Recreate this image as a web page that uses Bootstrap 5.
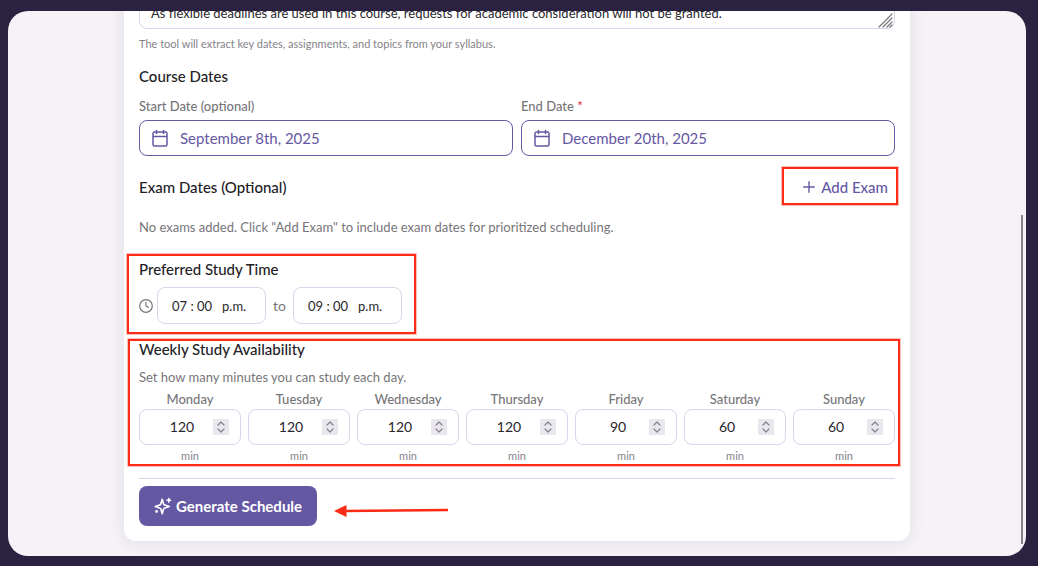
<!DOCTYPE html>
<html lang="en">
<head>
<meta charset="utf-8">
<meta name="viewport" content="width=device-width, initial-scale=1">
<title>Study Schedule Generator</title>
<link href="https://cdn.jsdelivr.net/npm/bootstrap@5.3.0/dist/css/bootstrap.min.css" rel="stylesheet">
<style>
  :root { --violet: #6558a3; --line: #d9d5ea; --mark: #fb2b17; }
  body { background: #2b2241; font-family: Lato, sans-serif; font-size: 13px; line-height: 20px; color: #777579; padding: 11px 12px 10px 8px; }
  .app-frame { height: calc(100vh - 21px); min-height: 480px; background: #f5f3f7; border-radius: 20px; padding: 0 16px 15px; }
  .planner { max-width: 786px; border: 0; border-radius: 12px; padding: 0 15px 15px; box-shadow: 0 2px 16px rgba(50, 40, 80, .1); color: inherit; }
  .scroll-thumb { width: 2px; top: 204px; bottom: 12px; right: 3px; background: #858389; }
  h2 { font-size: 15px; line-height: 24px; font-weight: 500; color: #232126; margin: 0; }
  .field-label { font-weight: 500; line-height: 20px; }
  .hint { font-size: 11px; line-height: 18px; color: #858389; }
  .form-control { font-size: 13px; line-height: 20px; color: #29272c; border-color: var(--line); border-radius: 8px; }
  .syllabus { height: 56px; min-height: 0; padding: 29px 11px 4px; resize: none; overflow: hidden; }
  .syllabus-hint { margin-top: 6px; }
  .grip { right: 1px; bottom: 1px; }
  .head-dates { margin: 11px 0 8px; }
  .date-grid { gap: 8px; }
  .date-box { height: 36px; margin-top: 4px; padding: 0 12px; gap: 11px; border: 1px solid var(--violet); border-radius: 8px; color: var(--violet); }
  .plain-input { min-width: 0; border: 0; outline: 0; padding: 0; background: transparent; color: inherit; }
  .date-box .plain-input { font-size: 15px; }
  .exam-head { margin-top: 13px; }
  .exam-note { margin: 12px 0 20px; }
  .add-exam { font-size: 15px; font-weight: 500; color: var(--violet); padding: 0 7px; height: 36px; gap: 6px; border: 0; }
  .time-row { margin-top: 6px; }
  .clock { margin-right: 4px; }
  .to-word { width: 27px; text-align: center; font-size: 14px; }
  .time-input { width: 109px; height: 37px; padding: 0 14px; white-space: pre; }
  .week-block { margin-top: 13px; }
  .week-note { margin: 6px 0 2px; }
  .day-grid { display: grid; grid-template-columns: repeat(7, minmax(0, 1fr)); gap: 7px; }
  .minutes-box { height: 36px; padding: 0 11px; border: 1px solid var(--line); border-radius: 8px; color: #29272c; }
  .minutes-box .plain-input { font-size: 14px; text-align: center; appearance: textfield; -moz-appearance: textfield; }
  .minutes-box .plain-input::-webkit-inner-spin-button { appearance: none; -webkit-appearance: none; margin: 0; }
  .minutes-unit { margin-top: 2px; }
  .spinner-keys { width: 16px; height: 16px; background: #e9e6ee; }
  .action-row { margin-top: 13px; border-top: 1px solid var(--line); padding-top: 7px; gap: 17px; }
  .generate { height: 40px; padding: 0 15px; gap: 4px; border: 0; border-radius: 8px; background: var(--violet); color: #fff; font-size: 15px; font-weight: 700; }
  .generate:hover { background: #574a95; color: #fff; }
  .arrow { margin-top: 10px; }
  .callout { position: absolute; border: 2px solid var(--mark); box-shadow: 0 0 0 1px rgba(251, 43, 23, .3); pointer-events: none; }
  .callout-exam { inset: -2px -3px 0 -2px; }
  .callout-time { inset: -3px -14px -10px -12px; }
  .callout-week { inset: 2px -5px -1px -11px; }
  .st { fill: none; stroke: currentColor; stroke-linecap: round; stroke-linejoin: round; }
</style>
</head>
<body>
<div class="app-frame position-relative overflow-hidden d-flex flex-column justify-content-end">
  <form class="planner card w-100 mx-auto">
    <div class="position-relative">
      <textarea class="form-control syllabus d-block" id="syllabus" rows="1" aria-label="Syllabus">As flexible deadlines are used in this course, requests for academic consideration will not be granted.</textarea>
      <svg class="grip position-absolute" width="16" height="15" viewBox="0 0 16 15" aria-hidden="true"><path class="st" style="color:#77757b" stroke-width="1.2" d="M1 14 14 1M5 14 14 5M9 14l5-5M12 14l2-2"/></svg>
    </div>
    <label class="hint syllabus-hint d-block" for="syllabus">The tool will extract key dates, assignments, and topics from your syllabus.</label>

    <h2 class="head-dates">Course Dates</h2>
    <div class="date-grid d-flex">
      <div class="w-50">
        <label class="field-label d-block" for="start">Start Date (optional)</label>
        <div class="date-box d-flex align-items-center">
          <svg width="17" height="19" viewBox="0 0 17 19" aria-hidden="true"><path class="st" stroke-width="1.5" d="M2.500 3h11A1.500 1.500 0 0 1 15 4.500v11a1.500 1.500 0 0 1-1.500 1.500h-11A1.500 1.500 0 0 1 1 15.500v-11A1.500 1.500 0 0 1 2.500 3ZM1 7.500h14M4.500 1.500v3M11.500 1.500v3"/></svg>
          <input class="plain-input flex-grow-1" id="start" type="text" value="September 8th, 2025">
        </div>
      </div>
      <div class="w-50">
        <label class="field-label d-block" for="end">End Date <span class="text-danger">*</span></label>
        <div class="date-box d-flex align-items-center">
          <svg width="17" height="19" viewBox="0 0 17 19" aria-hidden="true"><path class="st" stroke-width="1.5" d="M2.500 3h11A1.500 1.500 0 0 1 15 4.500v11a1.500 1.500 0 0 1-1.500 1.500h-11A1.500 1.500 0 0 1 1 15.500v-11A1.500 1.500 0 0 1 2.500 3ZM1 7.500h14M4.500 1.500v3M11.500 1.500v3"/></svg>
          <input class="plain-input flex-grow-1" id="end" type="text" value="December 20th, 2025">
        </div>
      </div>
    </div>

    <div class="exam-head d-flex justify-content-between align-items-center">
      <h2>Exam Dates (Optional)</h2>
      <div class="position-relative ps-2">
        <button type="button" class="btn add-exam d-flex align-items-center ms-1">
          <svg width="12" height="12" viewBox="0 0 12 12" aria-hidden="true"><path class="st" stroke-width="1.4" d="M6 .7v10.600M.7 6h10.600"/></svg>
          Add Exam
        </button>
        <span class="callout callout-exam"></span>
      </div>
    </div>
    <p class="exam-note">No exams added. Click "Add Exam" to include exam dates for prioritized scheduling.</p>

    <section class="position-relative align-self-start">
      <h2>Preferred Study Time</h2>
      <div class="time-row d-flex align-items-center">
        <svg class="clock" width="14" height="14" viewBox="0 0 14 14" aria-hidden="true"><circle class="st" cx="7" cy="7" r="6.300" stroke-width="1.200"/><path class="st" stroke-width="1.200" d="M7 3.300V7l2.400 1.300"/></svg>
        <input class="form-control time-input" type="text" aria-label="From" value="07 : 00   p.m.">
        <span class="to-word">to</span>
        <input class="form-control time-input" type="text" aria-label="To" value="09 : 00   p.m.">
      </div>
      <span class="callout callout-time"></span>
    </section>

    <section class="week-block position-relative">
      <h2>Weekly Study Availability</h2>
      <p class="week-note">Set how many minutes you can study each day.</p>
      <div class="day-grid text-center" id="days"></div>
      <span class="callout callout-week"></span>
    </section>

    <div class="action-row d-flex align-items-center">
      <button type="submit" class="btn generate d-flex align-items-center">
        <svg width="18" height="18" viewBox="0 0 18 18" aria-hidden="true"><path class="st" stroke-width="1.600" d="M8.200 2.200 9.500 6.800c.2.700.6 1.100 1.300 1.300L15.200 9.500l-4.400 1.400c-.7.200-1.100.6-1.300 1.300L8.200 16.800 6.900 12.200c-.2-.7-.6-1.100-1.300-1.300L1.200 9.500l4.400-1.400c.7-.2 1.100-.6 1.300-1.300ZM14.800 1.500v3.600M13 3.300h3.600"/><circle cx="2.600" cy="14.500" r="1.400" fill="currentColor"/></svg>
        Generate Schedule
      </button>
      <svg class="arrow" width="114" height="14" viewBox="0 0 114 14" aria-hidden="true"><path d="M11 7 114 6" stroke="#fb2b17" stroke-width="2.500"/><path d="M0 7 12.500 1v12Z" fill="#fb2b17"/></svg>
    </div>
  </form>
  <div class="scroll-thumb position-absolute"></div>
</div>
<script>
  const days = [["Monday",120],["Tuesday",120],["Wednesday",120],["Thursday",120],["Friday",90],["Saturday",60],["Sunday",60]];
  document.getElementById("days").innerHTML = days.map(([day, minutes]) => `
    <div>
      <label class="field-label d-block" for="${day}">${day}</label>
      <div class="minutes-box d-flex align-items-center">
        <input class="plain-input flex-grow-1" id="${day}" type="number" value="${minutes}">
        <svg class="spinner-keys flex-shrink-0" viewBox="0 0 16 16" aria-hidden="true"><path class="st" style="color:#858389" stroke-width="1.200" d="m5 6 3-3 3 3M5 10l3 3 3-3"/></svg>
      </div>
      <div class="hint minutes-unit">min</div>
    </div>`).join("");
</script>
<script src="https://cdn.jsdelivr.net/npm/bootstrap@5.3.0/dist/js/bootstrap.bundle.min.js"></script>
</body>
</html>
